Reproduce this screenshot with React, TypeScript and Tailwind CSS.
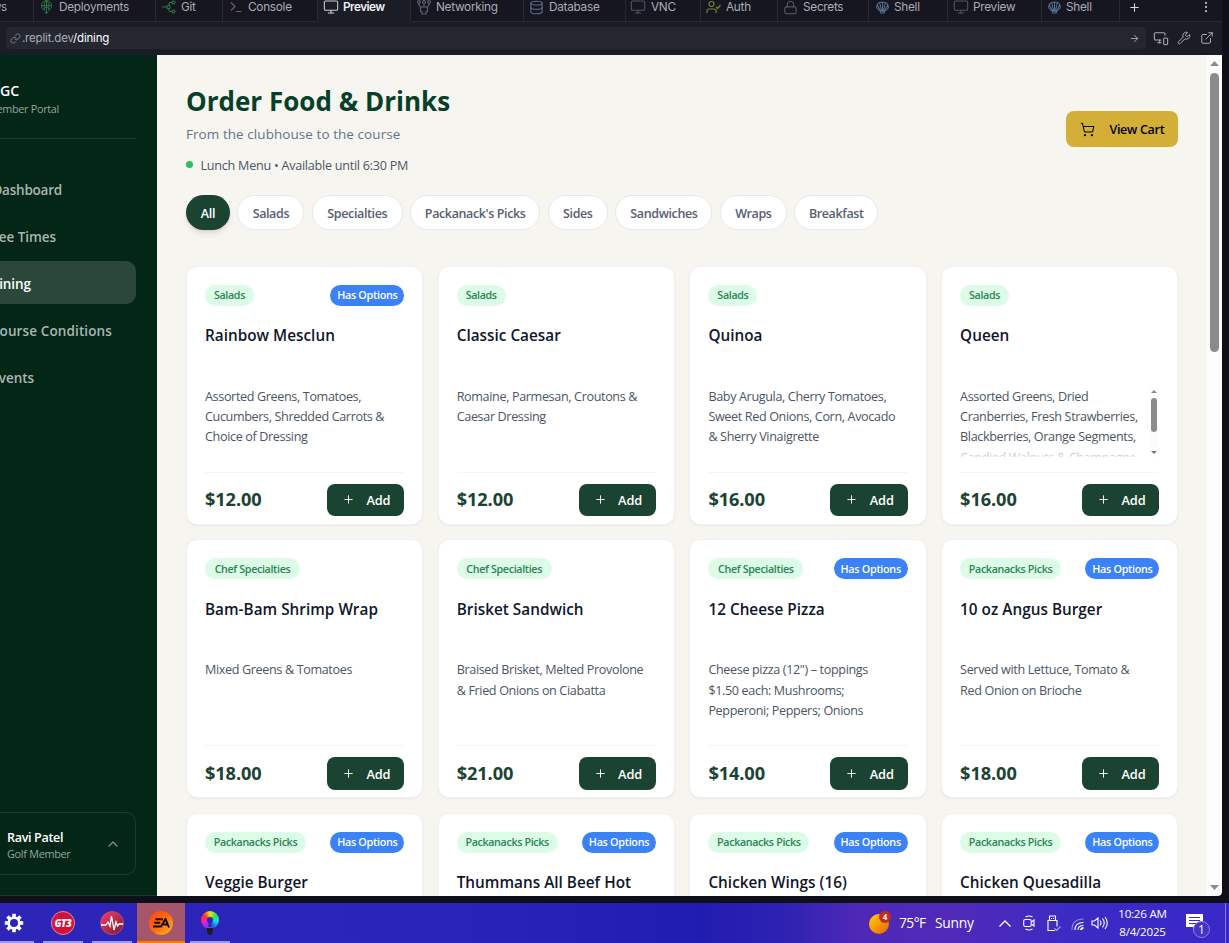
import type { ReactNode } from "react";
import {
  ArrowRight,
  ChevronUp,
  Database,
  EllipsisVertical,
  ExternalLink,
  Link,
  Lock,
  Monitor,
  MonitorSmartphone,
  Plus,
  ShoppingCart,
  Wrench,
} from "lucide-react";

type Tab = { label: string; width: string; pad: string; gap: string; icon: ReactNode; active?: boolean };

const DeployIcon = () => (
  <svg viewBox="0 0 14 16" className="h-4 w-[13px] text-[#2f7a48]" fill="none" stroke="currentColor" strokeWidth="1">
    <path d="M4.500 11.500A5.500 5.500 0 1 1 9.500 11.500M1.500 6.500h11M5 11.500C3.500 6 5 3 7 1c2 2 3.500 5 2 10.500M7 1v14M4.500 9.500 7 7.500l2.500 2M5 13l2 2 2-2" />
  </svg>
);
const GitIcon = () => (
  <svg viewBox="0 0 14 14" className="h-3.5 w-3.5 text-[#2f7a48]" fill="none" stroke="currentColor" strokeWidth="1.1">
    <path d="M0 7h5M7 5.5V4q0-1.500 1.500-1.500H10M7 8.500V10q0 1.500 1.500 1.500H10" />
    <circle cx="6.500" cy="7" r="1.700" />
    <circle cx="11.500" cy="2.500" r="1.500" />
    <circle cx="11.500" cy="11.500" r="1.500" />
  </svg>
);
const ConsoleIcon = () => (
  <svg viewBox="0 0 12 12" className="h-3 w-3 text-[#6e6552]" fill="none" stroke="currentColor" strokeWidth="1.200">
    <path d="M1 1.500 5 5.500 1 9.500M6 10.500h5.500" />
  </svg>
);
const NetworkIcon = () => (
  <svg viewBox="0 0 14 16" className="h-4 w-3.5 text-[#5d626d]" fill="none" stroke="currentColor" strokeWidth="1.100">
    <circle cx="2" cy="3" r="1.400" />
    <circle cx="7" cy="3" r="1.400" />
    <circle cx="12" cy="3" r="1.400" />
    <path d="M2 4.500v2L4 8h6l2-1.500v-2M7 4.500V8M3.500 8h7v4.500H9V15H5v-2.500H3.500z" />
  </svg>
);
const AuthIcon = () => (
  <svg viewBox="0 0 15 14" className="h-3.5 w-[15px] text-[#75803f]" fill="none" stroke="currentColor" strokeWidth="1.200">
    <circle cx="5.500" cy="4" r="2.500" />
    <path d="M1 13v-2q0-2 2-2h5q2 0 2 2v2M10 7l1.500 1.500L14.500 5" />
  </svg>
);
const FanIcon = () => (
  <svg viewBox="0 0 14 14" className="h-[13px] w-[13px] text-[#54708f]" fill="none" stroke="currentColor" strokeWidth="1.100">
    <path d="M5 13h4v-1.500l4.300-4.200Q13.500 1 7 1T.7 7.300L5 11.500zM7 11.500V1M5.700 11.500 1.500 4.500M8.300 11.500l4.200-7M6.300 11.500 4 2M7.700 11.500 10 2" />
  </svg>
);
const Mon = ({ active = false }: { active?: boolean }) => (
  <Monitor className={active ? "h-4 w-4 text-[#c9ccd3]" : "h-4 w-4 text-[#53555f]"} strokeWidth={1.6} />
);

const tabs: Tab[] = [
  { label: "Deployments", width: "w-[122px]", pad: "pl-1.5", gap: "ml-1.5", icon: <DeployIcon /> },
  { label: "Git", width: "w-[67px]", pad: "pl-1.5", gap: "ml-[5px]", icon: <GitIcon /> },
  { label: "Console", width: "w-[95px]", pad: "pl-[7px]", gap: "ml-1.5", icon: <ConsoleIcon /> },
  { label: "Preview", width: "w-[93px]", pad: "pl-[5px]", gap: "ml-1", icon: <Mon active />, active: true },
  { label: "Networking", width: "w-[113px]", pad: "pl-1.5", gap: "ml-[5px]", icon: <NetworkIcon /> },
  { label: "Database", width: "w-[102px]", pad: "pl-[5px]", gap: "ml-[5px]", icon: <Database className="h-[15px] w-[15px] text-[#53708c]" strokeWidth={1.8} /> },
  { label: "VNC", width: "w-[75px]", pad: "pl-1", gap: "ml-[5px]", icon: <Mon /> },
  { label: "Auth", width: "w-[77px]", pad: "pl-[5px]", gap: "ml-[5px]", icon: <AuthIcon /> },
  { label: "Secrets", width: "w-[91px]", pad: "pl-[5px]", gap: "ml-[5px]", icon: <Lock className="h-[15px] w-[15px] text-[#62636c]" strokeWidth={1.6} /> },
  { label: "Shell", width: "w-[79px]", pad: "pl-[7px]", gap: "ml-[5px]", icon: <FanIcon /> },
  { label: "Preview", width: "w-[94px]", pad: "pl-[5px]", gap: "ml-1", icon: <Mon /> },
  { label: "Shell", width: "w-[78px]", pad: "pl-1.5", gap: "ml-[5px]", icon: <FanIcon /> },
];

function Workspace() {
  return (
    <div className="h-[55px] w-[1222px] bg-[#1a1c26] font-['Inter',sans-serif] text-[#a9adb6]">
      <div className="flex h-[22px] items-start">
        <div className="flex h-[22px] w-[34px] items-start border-r border-b border-[#272934] bg-[#15161f]">
          <span className="flex w-[7px] justify-end text-[11.500px] leading-[14px] tracking-[-0.200px]">ws</span>
        </div>
        {tabs.map((t, i) => (
          <div
            key={i}
            className={`flex h-[22px] shrink-0 items-start border-r border-[#272934] ${t.width} ${t.pad} ${
              t.active ? "bg-[#1a1c26] text-[#eceef2]" : "border-b bg-[#15161f]"
            }`}
          >
            <span className="flex h-3.5 items-center">{t.icon}</span>
            <span className={`text-[11.800px] leading-[14px] ${t.gap} ${t.active ? "font-semibold tracking-[-0.550px]" : "tracking-[-0.280px]"}`}>{t.label}</span>
          </div>
        ))}
        <div className="flex h-[22px] grow items-start justify-between border-b border-[#272934] bg-[#15161f] pr-[9px] pl-2">
          <Plus className="mt-px h-[13px] w-[13px] text-[#d6d8dc]" strokeWidth={2} />
          <EllipsisVertical className="h-3.5 w-3.5 text-[#a9adb6]" />
        </div>
      </div>
      <div className="flex h-[33px] items-start pt-[5px] pl-1.5">
        <div className="flex h-[22px] w-[1140px] items-center rounded bg-[#242630] pr-1.5 pl-1">
          <Link className="h-[11px] w-[11px] text-[#8c909a]" strokeWidth={1.7} />
          <span className="-mt-px ml-px text-[11.500px] leading-4 tracking-[-0.190px]">
            .replit.dev<span className="text-white">/dining</span>
          </span>
          <ArrowRight className="ml-auto h-[11px] w-[11px]" />
        </div>
        <MonitorSmartphone className="mt-[3px] ml-[7px] h-4 w-4" strokeWidth={1.6} />
        <Wrench className="mt-1 ml-2 h-3.5 w-3.5" strokeWidth={1.7} />
        <ExternalLink className="mt-1 ml-[9px] h-3.5 w-3.5" strokeWidth={1.7} />
      </div>
    </div>
  );
}

const nav = [
  { label: "Dashboard", width: "w-[62px] tracking-[-0.220px]" },
  { label: "ee Times", width: "w-[56px]" },
  { label: "ining", width: "w-[31px]", active: true },
  { label: "Course Conditions", width: "w-[112px] tracking-[0.120px]" },
  { label: "vents", width: "w-[34px]" },
];

function Sidebar() {
  return (
    <aside className="flex h-[841px] w-[157px] shrink-0 flex-col overflow-hidden bg-[#042617]">
      <div className="mr-[21px] h-[84px] border-b border-[#1b3a2b] pt-[26px]">
        <div className="flex w-[19px] justify-end text-[14.200px] leading-5 font-semibold tracking-[-0.2px] text-white">GC</div>
        <div className="-mt-px flex w-[59px] justify-end text-[10.800px] leading-[18px] tracking-[-0.280px] whitespace-nowrap text-[#94a69c]">ember Portal</div>
      </div>
      <nav className="mt-[28px] mr-[21px] flex flex-col gap-[4px]">
        {nav.map((n) => (
          <div
            key={n.label}
            className={`flex h-[43px] items-center rounded-r-[10px] pt-[3px] text-[13.500px] font-semibold tracking-[-0.060px] whitespace-nowrap ${
              n.active ? "bg-[#2b4739] text-white" : "text-[#a9b6af]"
            }`}
          >
            <div className={`flex justify-end ${n.width}`}>{n.label}</div>
          </div>
        ))}
      </nav>
      <div className="mt-auto border-b border-[#1b3a2b] pb-5">
        <div className="mr-[21px] flex h-[63px] items-center rounded-r-[10px] border border-l-0 border-[#1b3a2b] pr-[14px] pl-[7px]">
          <div className="flex flex-col pt-1">
            <span className="text-[12.600px] leading-4 font-semibold tracking-[-0.350px] text-white">Ravi Patel</span>
            <span className="text-[10.800px] leading-4 tracking-[-0.260px] text-[#94a69c]">Golf Member</span>
          </div>
          <ChevronUp className="ml-auto h-4 w-4 text-[#7f9387]" strokeWidth={1.8} />
        </div>
      </div>
    </aside>
  );
}

const filters = [
  { label: "All", width: "w-11" },
  { label: "Salads", width: "w-[67px]" },
  { label: "Specialties", width: "w-[91px]" },
  { label: "Packanack's Picks", width: "w-[130px]" },
  { label: "Sides", width: "w-[60.500px]" },
  { label: "Sandwiches", width: "w-[97px]" },
  { label: "Wraps", width: "w-[67px]" },
  { label: "Breakfast", width: "w-[84px]" },
];

type Item = { tag: string; name: string; lines: string[]; price: string; options?: boolean; scroll?: boolean };

const items: Item[] = [
  { tag: "Salads", name: "Rainbow Mesclun", lines: ["Assorted Greens, Tomatoes,", "Cucumbers, Shredded Carrots &", "Choice of Dressing"], price: "$12.00", options: true },
  { tag: "Salads", name: "Classic Caesar", lines: ["Romaine, Parmesan, Croutons &", "Caesar Dressing"], price: "$12.00" },
  { tag: "Salads", name: "Quinoa", lines: ["Baby Arugula, Cherry Tomatoes,", "Sweet Red Onions, Corn, Avocado", "& Sherry Vinaigrette"], price: "$16.00" },
  { tag: "Salads", name: "Queen", lines: ["Assorted Greens, Dried", "Cranberries, Fresh Strawberries,", "Blackberries, Orange Segments,", "Candied Walnuts & Champagne"], price: "$16.00", scroll: true },
  { tag: "Chef Specialties", name: "Bam-Bam Shrimp Wrap", lines: ["Mixed Greens & Tomatoes"], price: "$18.00" },
  { tag: "Chef Specialties", name: "Brisket Sandwich", lines: ["Braised Brisket, Melted Provolone", "& Fried Onions on Ciabatta"], price: "$21.00" },
  { tag: "Chef Specialties", name: "12 Cheese Pizza", lines: ['Cheese pizza (12") – toppings', "$1.50 each: Mushrooms;", "Pepperoni; Peppers; Onions"], price: "$14.00", options: true },
  { tag: "Packanacks Picks", name: "10 oz Angus Burger", lines: ["Served with Lettuce, Tomato &", "Red Onion on Brioche"], price: "$18.00", options: true },
  { tag: "Packanacks Picks", name: "Veggie Burger", lines: [], price: "$15.00", options: true },
  { tag: "Packanacks Picks", name: "Thummans All Beef Hot", lines: [], price: "$12.00", options: true },
  { tag: "Packanacks Picks", name: "Chicken Wings (16)", lines: [], price: "$18.00", options: true },
  { tag: "Packanacks Picks", name: "Chicken Quesadilla", lines: [], price: "$16.00", options: true },
];

const tagWidths: Record<string, string> = {
  Salads: "w-[49px]",
  "Chef Specialties": "w-[95px]",
  "Packanacks Picks": "w-[101px]",
};

function Card({ item }: { item: Item }) {
  return (
    <article className="flex h-[259.200px] flex-col rounded-[11px] border border-[#f0f0f0] bg-white px-[18px] pt-[18px] shadow-[0_1px_2px_rgba(0,0,0,0.05)]">
      <div className="flex h-[21px] items-center justify-between">
        <span className={`flex h-[21px] items-center justify-center rounded-full bg-[#dcfce7] text-[10.700px] font-semibold tracking-[-0.340px] whitespace-nowrap text-[#2b8552] ${tagWidths[item.tag]}`}>
          {item.tag}
        </span>
        {item.options && (
          <span className="flex h-[21px] w-[74px] items-center justify-center rounded-full bg-[#3b82f6] text-[10.800px] font-semibold tracking-[-0.300px] whitespace-nowrap text-white">
            Has Options
          </span>
        )}
      </div>
      <h3 className="mt-[19.500px] h-[61.500px] text-[15.300px] leading-5 font-semibold tracking-[0.020px] whitespace-nowrap text-[#0f172a]">{item.name}</h3>
      <div className="flex h-[70px] overflow-hidden">
        <div className="relative h-[70px] grow">
          {item.lines.map((l) => (
            <p key={l} className="h-[20.250px] text-[12.600px] leading-[20.250px] tracking-[-0.360px] whitespace-nowrap text-[#4b5563]">
              {l}
            </p>
          ))}
          {item.scroll && <div className="absolute inset-x-0 bottom-0 h-[14px] bg-linear-to-b from-white/30 to-white/80" />}
        </div>
        {item.scroll && (
          <div className="flex h-[70px] w-[9px] shrink-0 flex-col items-start bg-[#fcfcfc] pt-[3px] pl-px">
            <svg viewBox="0 0 6 3" className="h-[3px] w-1.5 fill-[#8b8b8b]"><path d="M3 0l3 3H0z" /></svg>
            <div className="mt-[5px] h-[34px] w-1.5 rounded-full bg-[#8b8b8b]" />
            <svg viewBox="0 0 6 3" className="mt-[19px] h-[3px] w-1.5 fill-[#777777]"><path d="M0 0h6L3 3z" /></svg>
          </div>
        )}
      </div>
      <div className="mt-[15px] flex items-start justify-between border-t border-[#f3f4f6] pt-[11px]">
        <span className="-mt-[0.500px] text-[18.200px] leading-8 font-bold tracking-[-0.100px] text-[#1b4332]">{item.price}</span>
        <button className="flex h-[32.400px] w-[77.400px] items-center rounded-[8px] bg-[#1b4332] pl-[15px] text-[12.800px] font-semibold tracking-[-0.150px] text-white">
          <Plus className="h-[13px] w-[13px]" strokeWidth={1.700} />
          <span className="ml-[11.500px] pt-[2px]">Add</span>
        </button>
      </div>
    </article>
  );
}

function Dining() {
  return (
    <main className="h-[841px] w-[1050px] shrink-0 overflow-hidden bg-[#f7f5f0] pt-[29px] pr-[28.600px] pl-[29px]">
      <header className="flex h-[110px] items-start justify-between">
        <div>
          <h1 className="h-[37px] text-[26px] leading-[35px] font-bold tracking-[0.010px] whitespace-nowrap text-[#064028]">Order Food &amp; Drinks</h1>
          <p className="h-[32px] text-[13.500px] leading-[27px] tracking-[0.060px] text-[#64748b]">From the clubhouse to the course</p>
          <div className="flex items-start text-[12.600px] leading-6 tracking-[-0.250px] text-[#4b5563]">
            <span className="mt-[8px] mr-[7.500px] h-[7px] w-[7px] rounded-full bg-[#22c55e]" />
            <span className="pt-px">Lunch Menu • Available until 6:30 PM</span>
          </div>
        </div>
        <button className="mt-[27px] flex h-9 w-28 items-center rounded-[8px] bg-[#d4af37] pl-3.5 text-[12.600px] font-semibold tracking-[-0.330px] whitespace-nowrap text-black">
          <ShoppingCart className="h-[15px] w-[15px]" strokeWidth={1.700} />
          <span className="ml-3.5 pt-[2px]">View Cart</span>
        </button>
      </header>
      <div className="mt-px flex gap-[7.400px]">
        {filters.map((f, i) => (
          <button
            key={f.label}
            className={`flex h-[35px] shrink-0 items-center justify-center rounded-full pt-[3px] text-[12.500px] font-semibold whitespace-nowrap ${f.width} ${
              i === 0
                ? "bg-[#1b4332] tracking-[-0.200px] text-white shadow-md"
                : "border border-[#e5e7eb] bg-white tracking-[-0.380px] text-[#566070]"
            }`}
          >
            {f.label}
          </button>
        ))}
      </div>
      <div className="mt-[35.800px] grid grid-cols-4 gap-x-[14.400px] gap-y-[14.300px]">
        {items.map((item) => (
          <Card key={item.name} item={item} />
        ))}
      </div>
    </main>
  );
}

function Scrollbar() {
  return (
    <div className="flex h-[841px] w-[15px] flex-col items-center rounded-br bg-[#fcfcfc] pt-[6px] pb-[6px]">
      <svg viewBox="0 0 9 5" className="h-[5px] w-[9px] fill-[#8b8b8b]"><path d="M4.500 0 9 5H0z" /></svg>
      <div className="mt-[7px] h-[279px] w-[9px] rounded-full bg-[#8b8b8b]" />
      <svg viewBox="0 0 9 5" className="mt-auto h-[5px] w-[9px] fill-[#8b8b8b]"><path d="M0 0h9L4.500 5z" /></svg>
    </div>
  );
}

const gearTeeth = [0, 45, 90, 135, 180, 225, 270, 315];

function Gear() {
  return (
    <svg viewBox="0 0 20 20" className="h-5 w-5">
      {gearTeeth.map((a) => (
        <rect key={a} x="8.200" y="0.800" width="3.600" height="4" fill="white" transform={`rotate(${a} 10 10)`} />
      ))}
      <circle cx="10" cy="10" r="5.300" fill="none" stroke="white" strokeWidth="2.600" />
    </svg>
  );
}

function Taskbar() {
  return (
    <footer className="flex h-10 items-stretch bg-linear-[90deg,#2d25b8_0%,#2b24b9_35%,#211cb0_57%,#2d22b2_64%,#4f28b5_70%,#4f2ab9_78%,#3a2bc4_88%,#3928c8_100%] font-['Open_Sans',sans-serif] text-white">
      <div className="flex w-[34px] items-center border-b-2 border-[#9c97e0] pt-px pl-1">
        <Gear />
      </div>
      <div className="ml-[9px] flex w-10 items-center justify-center border-b-2 border-[#9c97e0] pt-0.5">
        <div className="flex h-6 w-6 items-center justify-center rounded-full border border-[#dc8aa3] bg-[#d5103b] text-[10px] font-extrabold tracking-[-0.500px] italic">GT3</div>
      </div>
      <div className="ml-[9px] flex w-10 items-center justify-center border-b-2 border-[#9c97e0] pt-0.5">
        <div className="flex h-6 w-6 items-center rounded-full border border-[#b64a7b] bg-linear-to-br from-[#f34169] to-[#84172f]">
          <svg viewBox="0 0 22 16" className="h-4 w-[22px]" fill="none" stroke="white" strokeWidth="1.300"><path d="M0 10h5l2-3 2 4 1.500-10L13 15l2-8 1.500 4L18 9h4" /></svg>
        </div>
      </div>
      <div className="ml-[5px] flex w-12 items-center justify-center border-b-2 border-[#ff7a00] bg-[#a5566b] pt-0.5">
        <div className="flex h-6 w-6 items-center justify-center rounded-full bg-linear-to-br from-[#ff3d12] via-[#ff6a10] to-[#ffb52a]">
          <svg viewBox="0 0 18 10" className="h-2.5 w-[18px]" fill="none" stroke="#120805" strokeWidth="1.900"><path d="M3.500 1.200H11M2.200 4.700h6M1 8.500h8L13.500 1 17 9.500M11.500 6.500h4" /></svg>
        </div>
      </div>
      <div className="ml-[5px] flex w-10 items-center justify-center border-b-2 border-[#9c97e0] pt-0.5">
        <div className="relative h-6 w-[18px]">
          <div className="h-[18px] w-[18px] rounded-full bg-[conic-gradient(#e5e719,#35e645,#14d9e6,#205ff0,#a328ef,#f51fb7,#ff3320,#e5e719)]" />
          <svg viewBox="0 0 18 24" className="absolute inset-0 h-6 w-[18px]"><circle cx="9" cy="9" r="3" fill="#2d25b8" /><path d="M7.500 11h3v5h-3z" fill="#2d25b8" /><path d="M6 17h6v4l-2 3H8l-2-3z" fill="#1c1a22" /></svg>
        </div>
      </div>
      <div className="ml-auto flex items-center">
        <div className="relative h-6 w-6">
          <div className="mt-[3px] h-5 w-5 rounded-full bg-linear-to-br from-[#ffd400] to-[#e65c00]" />
          <span className="absolute top-0 left-[10px] flex h-3 w-3 items-center justify-center rounded-full bg-[#c42b1c] text-[8px] font-bold">4</span>
        </div>
        <span className="ml-[6px] w-9 text-[13.800px] tracking-[-0.550px] whitespace-nowrap">75°F</span>
        <span className="w-[59px] text-[13.800px] tracking-[-0.250px]">Sunny</span>
        <svg viewBox="0 0 12 7" className="ml-[5px] h-[7px] w-3" fill="none" stroke="white" strokeWidth="1.300"><path d="m.5 6.500 5.500-5.500 5.500 5.500" /></svg>
        <svg viewBox="0 0 12 16" className="ml-3 h-4 w-3" fill="none" stroke="white" strokeWidth="1.100"><rect x=".7" y="4.500" width="7.500" height="7" rx="1.500" /><path d="M8.500 7 11 5v6L8.500 9M2.500 2Q6 0 9.500 2M2.500 14q3.500 2 7 0" /></svg>
        <svg viewBox="0 0 14 17" className="ml-[12px] h-[17px] w-3.5" fill="none" stroke="white" strokeWidth="1.100"><path d="M2.500 5.500V1h6v4.500M8 15.500H1v-10h9v6M4.500 3v1M6.500 3v1" /><path d="m7.500 13 2 2.500 4-4" opacity=".6" /></svg>
        <svg viewBox="0 0 14 14" className="mt-[2px] ml-[10px] h-3.5 w-3.5" fill="none" stroke="white" strokeWidth="1.100"><path d="M1 13Q1 2 12.500 2" opacity=".45" /><path d="M4 13q0-7.500 8.500-7.500M7 13q0-4.500 5.500-4.500" /><path d="M10 13q0-2 2.500-2" strokeWidth="1.800" /></svg>
        <svg viewBox="0 0 18 14" className="ml-[6px] h-3.5 w-[18px]" fill="none" stroke="white" strokeWidth="1.100"><path d="M1 5v4h2.500L7 12V2L3.500 5zM9 4.500q2 2.500 0 5M11.500 2.500q3.500 4.500 0 9M14 1q4.500 6 0 12" /></svg>
        <div className="ml-[8px] flex w-[51px] flex-col items-center text-[11.600px] leading-[18px] tracking-[-0.240px] whitespace-nowrap">
          <span>10:26 AM</span>
          <span>8/4/2025</span>
        </div>
        <div className="relative ml-[18px] mt-1.5 h-6 w-[27px]">
          <svg viewBox="0 0 17 17" className="h-[17px] w-[17px]"><path d="M0 0h17v13h-6l-3 3-1-3H0z" fill="white" /><path d="M3 3.500h11M3 6.500h11M3 9.500h7" stroke="#3b2ac6" /></svg>
          <span className="absolute top-[7px] left-[7px] flex h-[17px] w-[17px] items-center justify-center rounded-full border border-[#8b82e5] bg-[#4633c5] text-[12px]">1</span>
        </div>
        <div className="ml-[12px] h-10 w-[4px] border-l border-[#8880dc]" />
      </div>
    </footer>
  );
}

export default function App() {
  return (
    <div className="flex h-[943px] w-[1229px] flex-col overflow-hidden bg-[#0e0f18] font-['Open_Sans','Noto_Sans',sans-serif]">
      <Workspace />
      <div className="flex h-[841px] w-[1222px] overflow-hidden rounded-br">
        <Sidebar />
        <Dining />
        <Scrollbar />
      </div>
      <div className="h-[7px]" />
      <Taskbar />
    </div>
  );
}
